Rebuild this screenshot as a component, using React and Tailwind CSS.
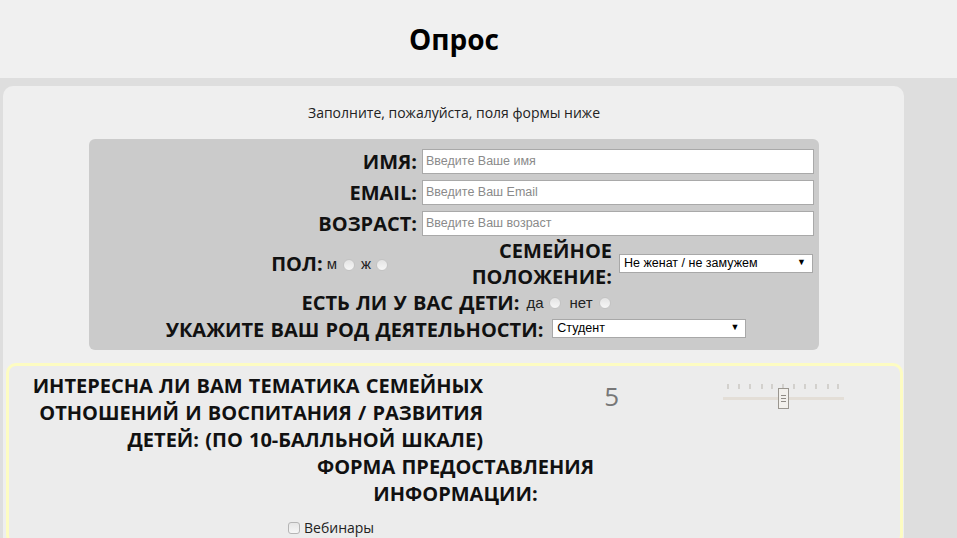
import React from 'react'

function Radio() {
  return (
    <span className="inline-block w-[12px] h-[12px] rounded-full border border-[#c4c4c4] bg-gradient-to-b from-[#e4e4e4] to-[#f6f6f6] align-middle" />
  )
}

function FakeSelect({ value, width }) {
  return (
    <div
      className={`${width} h-[19px] bg-white border border-[#a8a8a8] flex items-center justify-between pl-[4px] pr-[6px] font-['Liberation_Sans',sans-serif] text-[12.5px] text-black`}
    >
      <span>{value}</span>
      <span className="text-[9px]">▼</span>
    </div>
  )
}

function TextField({ placeholder }) {
  return (
    <div className="w-[392px] h-[25px] bg-white border border-[#a9a9a9] flex items-center pl-[3px] font-['Liberation_Sans',sans-serif] text-[12.5px] text-[#8a8a8a]">
      {placeholder}
    </div>
  )
}

function Slider() {
  const ticks = [727, 738, 749, 761, 771, 782, 793, 804, 815, 827, 837]
  return (
    <svg width="124" height="28" viewBox="720 382 124 28">
      {ticks.map((x) => (
        <line key={x} x1={x} y1="383" x2={x} y2="388" stroke="#b9b5ae" strokeWidth="1" />
      ))}
      <rect x="722" y="396" width="121" height="3" fill="#e3ded7" />
      <rect x="777.5" y="387.5" width="10" height="20" fill="#f2f0ec" stroke="#9a968f" />
      <line x1="780" y1="394.5" x2="785" y2="394.5" stroke="#8f8b85" />
      <line x1="780" y1="397.5" x2="785" y2="397.5" stroke="#8f8b85" />
      <line x1="780" y1="400.5" x2="785" y2="400.5" stroke="#8f8b85" />
    </svg>
  )
}

export default function App() {
  const label = "font-bold text-[20px] text-[#111] uppercase leading-[26px] [word-spacing:1px]"
  const small = "font-['Liberation_Sans',sans-serif] text-[15px] text-[#222]"
  return (
    <div className="min-h-screen bg-[#dedede] font-['Open_Sans',sans-serif]">
      <header className="h-[78px] bg-[#f0f0f0] flex items-center">
        <h1 className="w-[908px] text-center text-[28px] font-bold text-black">Опрос</h1>
      </header>

      <main className="ml-[3px] mt-[8px] w-[901px] bg-[#efefef] rounded-t-[10px] pt-[17px] pb-[14px]">
        <p className="text-center text-[14px] text-[#222] leading-[20px] pl-[1px]">
          Заполните, пожалуйста, поля формы ниже
        </p>

        {/* main form */}
        <div className="ml-[86px] mt-[16px] w-[730px] h-[211px] bg-[#cbcbcb] rounded-[6px] pt-[10px]">
          <div className="flex flex-col gap-[6px]">
            {[
              ['Имя:', 'Введите Ваше имя'],
              ['Email:', 'Введите Ваш Email'],
              ['Возраст:', 'Введите Ваш возраст'],
            ].map(([l, p]) => (
              <div key={l} className="flex items-center h-[25px]">
                <div className={`${label} w-[333px] text-right pr-[5px]`}>{l}</div>
                <TextField placeholder={p} />
              </div>
            ))}
          </div>

          <div className="flex items-center mt-[2px]">
            <div className="w-[299px] flex justify-end items-center">
              <span className={label}>Пол:</span>
              <span className={`${small} ml-[4px]`}>м</span>
              <span className="ml-[6px] -mt-[2px]"><Radio /></span>
              <span className={`${small} ml-[6px]`}>ж</span>
              <span className="ml-[5px] -mt-[2px]"><Radio /></span>
            </div>
            <div className={`${label} w-[226px] text-right pr-[2px]`}>
              Семейное
              <br />
              положение:
            </div>
            <div className="ml-[5px] mt-[-2px]">
              <FakeSelect value="Не женат / не замужем" width="w-[194px]" />
            </div>
          </div>

          <div className="flex items-center justify-center pl-[4px]">
            <span className={label}>Есть ли у вас дети:</span>
            <span className={`${small} ml-[7px]`}>да</span>
            <span className="ml-[5px] -mt-[4px]"><Radio /></span>
            <span className={`${small} ml-[9px]`}>нет</span>
            <span className="ml-[6px] -mt-[4px]"><Radio /></span>
          </div>

          <div className="flex items-center justify-center pl-[4px] mt-[1px]">
            <span className={label}>Укажите ваш род деятельности:</span>
            <span className="ml-[9px] -mt-[4px]">
              <FakeSelect value="Студент" width="w-[194px]" />
            </span>
          </div>
        </div>

        {/* interests */}
        <section className="ml-[3px] mt-[13px] w-[897px] rounded-[10px] border-[3px] border-[#fdfcc2] bg-[#ececec] pt-[6px] pb-[4px]">
          <div className="flex items-start">
            <div className={`${label} w-[474px] text-right leading-[27px]`}>
              Интересна ли Вам тематика семейных
              <br />
              отношений и воспитания / развития
              <br />
              детей: (по 10-балльной шкале)
            </div>
            <div className="w-[141px] text-right pr-[5px] pt-[9px] text-[26px] leading-[30px] text-[#777]">5</div>
            <div className="ml-[97px] pt-[11px]">
              <Slider />
            </div>
          </div>
          <div className={`${label} text-center leading-[27px] pl-[2px]`}>
            Форма предоставления
            <br />
            информации:
          </div>
          <div className="flex items-center ml-[279px] mt-[10px] gap-[4px]">
            <span className="inline-block w-[12px] h-[12px] rounded-[3px] border border-[#b5b5b5] bg-gradient-to-b from-[#e6e6e6] to-[#f7f7f7]" />
            <span className="text-[14px] text-[#222]">Вебинары</span>
          </div>
        </section>
      </main>
    </div>
  )
}
